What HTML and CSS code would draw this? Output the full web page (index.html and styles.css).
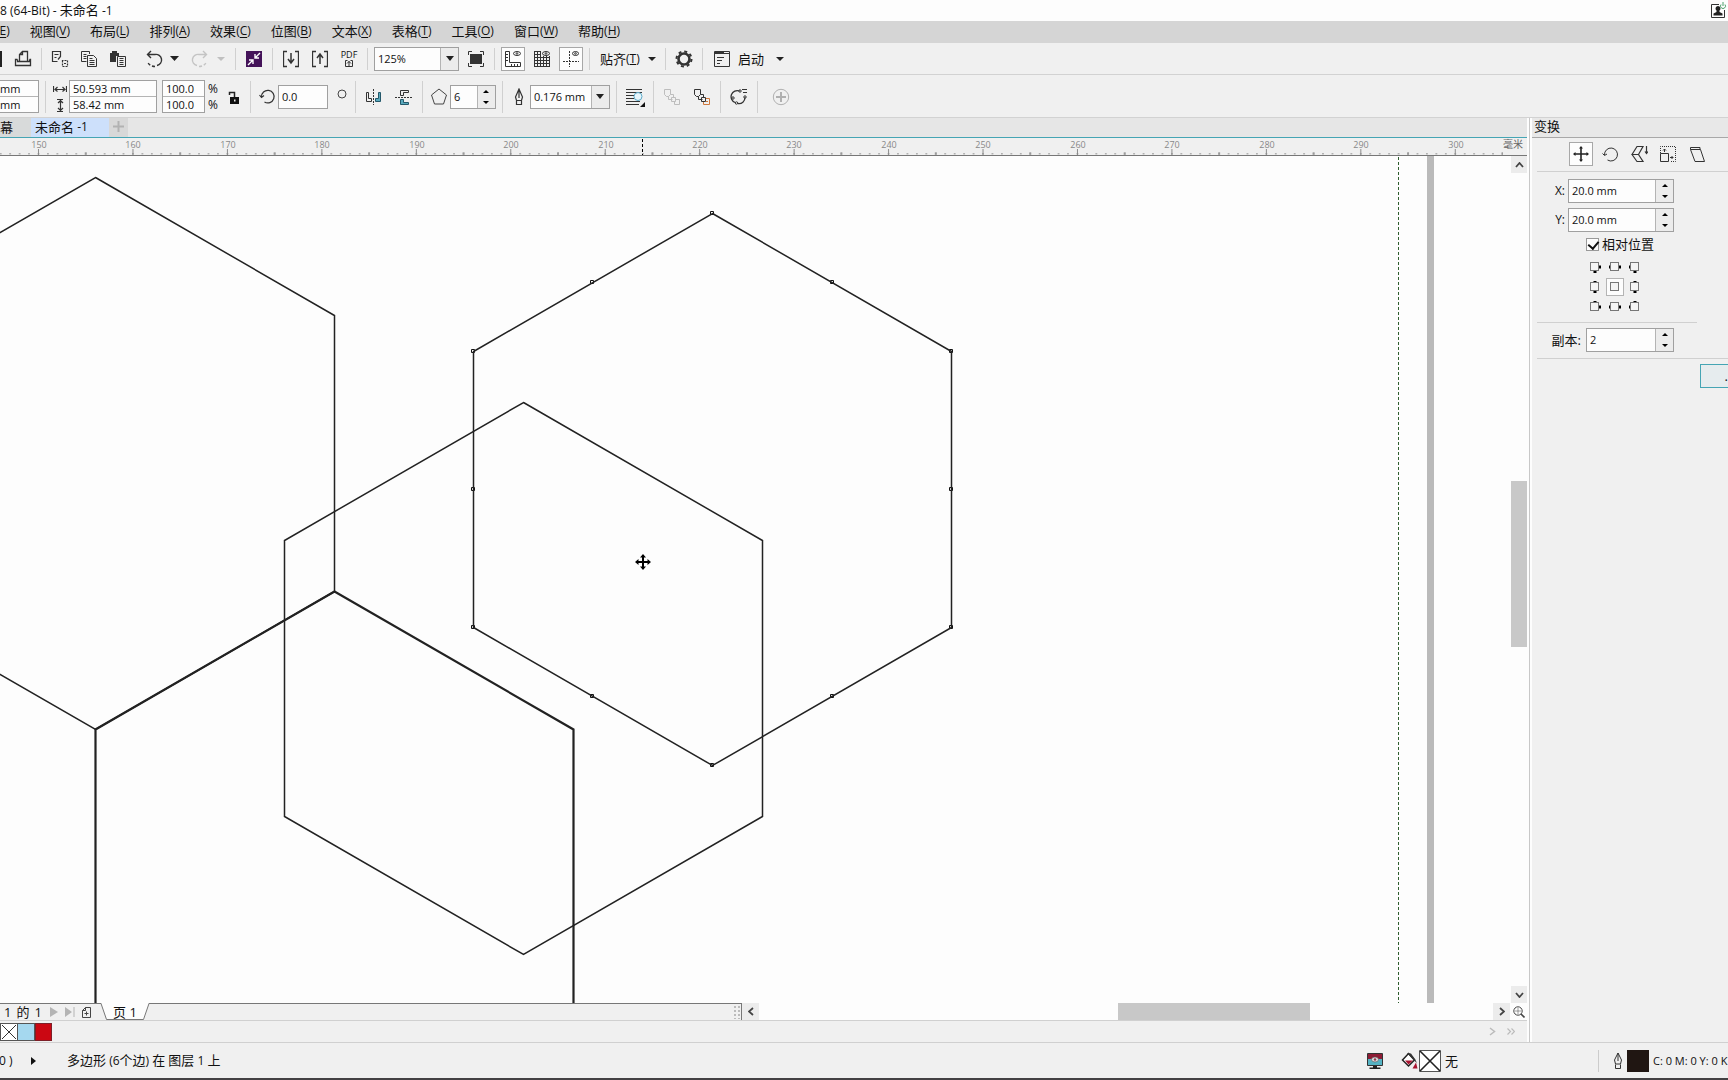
FILE: index.html
```html
<!DOCTYPE html>
<html lang="zh-CN">
<head>
<meta charset="utf-8">
<title>未命名 -1</title>
<link rel="stylesheet" href="styles.css">
</head>
<body>
<div class="app">
  <header class="titlebar">
    <h1 class="title"><span class="lat">8 (64-Bit) - </span>未命名<span class="lat"> -1</span></h1>
    <button class="user" aria-label="账户"><svg width="17" height="17" viewBox="0 0 17 17"><path d="M9 2.500H1.500v13h13V8" fill="none" stroke="#333"/><path d="M8 4a2.500 2.500 0 0 1 1.500 4.500L9.500 10l3 1.500V13.500H3.500V11.500L6.500 10V8.500A2.500 2.500 0 0 1 8 4z" fill="#222"/><path d="M11 2.500a2.500 2.500 0 1 0 4 0M13 0v4" fill="none" stroke="#4c9f6a"/></svg></button>
  </header>

  <nav class="menubar">
    <button class="menu first"><span class="lat">(<u>E</u>)</span></button>
    <button class="menu">视图<span class="lat">(<u>V</u>)</span></button>
    <button class="menu">布局<span class="lat">(<u>L</u>)</span></button>
    <button class="menu">排列<span class="lat">(<u>A</u>)</span></button>
    <button class="menu">效果<span class="lat">(<u>C</u>)</span></button>
    <button class="menu">位图<span class="lat">(<u>B</u>)</span></button>
    <button class="menu">文本<span class="lat">(<u>X</u>)</span></button>
    <button class="menu">表格<span class="lat">(<u>T</u>)</span></button>
    <button class="menu">工具<span class="lat">(<u>O</u>)</span></button>
    <button class="menu">窗口<span class="lat">(<u>W</u>)</span></button>
    <button class="menu">帮助<span class="lat">(<u>H</u>)</span></button>
  </nav>

  <div class="bar tools">
    <span class="edge"></span>
    <button class="ico" aria-label="打印"><svg width="18" height="18" viewBox="0 0 18 18" fill="none" stroke="#333" stroke-width="1.300"><path d="M5.500 11.500V4.500L8.500 1.500H13.500V11.500M8.500 1.500V4.500H5.500M3.500 9.500H1.500v6h15v-6H15.500M3.500 9.500v2H15.500v-2"/></svg></button>
    <span class="sep"></span>
    <button class="ico" aria-label="剪切"><svg width="18" height="18" viewBox="0 0 18 18" fill="none" stroke="#333" stroke-width="1.200"><path d="M6.500 11.500H1.500V1.500H9.500V6.500L7 9.500M3.500 4.500h4M3.500 7.500h2"/><path d="M11.500 11.500v-1h5v6h-5v-5M13 13.500h2" stroke-dasharray="2 1"/></svg></button>
    <button class="ico" aria-label="复制"><svg width="18" height="18" viewBox="0 0 18 18" fill="none" stroke="#333"><path d="M6.500 11.500H1.500V1.500H9.500V4M3.500 4.500h3M3.500 6.500h3M3.500 8.500h3"/><path d="M7.500 5.500h6l3 3v8h-9zM9.500 8.500h3M9.500 10.500h5M9.500 12.500h5M9.500 14.500h5"/></svg></button>
    <button class="ico" aria-label="粘贴"><svg width="18" height="18" viewBox="0 0 18 18" fill="none" stroke="#333"><path d="M1 3h2V1h5v2h2v3H7v6H1z" fill="#333" stroke="none"/><path d="M8.500 6.500h8v10h-8zM10.500 8.500h4M10.500 10.500h4M10.500 12.500h4M10.500 14.500h4"/></svg></button>
    <div class="split gap7">
      <button class="ico" aria-label="撤消"><svg width="18" height="18" viewBox="0 0 18 18" fill="none" stroke="#333" stroke-width="1.400"><path d="M3 4.500h7a5.500 5.500 0 0 1 2 11M6 1L2.500 4.500 6 8"/><path d="M10 16.500q-5 0-8-5" stroke-dasharray="3 2"/></svg></button>
      <button class="caret" aria-label="撤消列表"><svg width="9" height="5"><path d="M0 0h9L4.500 5z" fill="#222"/></svg></button>
    </div>
    <div class="split">
      <button class="ico" aria-label="重做" disabled><svg width="18" height="18" viewBox="0 0 18 18" fill="none" stroke="#c4c4c4" stroke-width="1.400"><path d="M15 4.500H8a5.500 5.500 0 0 0-2 11M12 1l3.500 3.500L12 8"/><path d="M8 16.500q5 0 8-5" stroke-dasharray="3 2"/></svg></button>
      <button class="caret" aria-label="重做列表" disabled><svg width="8" height="4"><path d="M0 0h8L4 4z" fill="#c0c0c0"/></svg></button>
    </div>
    <span class="sep"></span>
    <button class="ico" aria-label="搜索内容"><svg width="16" height="16" viewBox="0 0 16 16"><path d="M0 0h16v16H0z" fill="#441359"/><path d="M14 2L9.500 6.500M9 3v4h4M2 14l4.500-4.500M3 9h4v4" fill="none" stroke="#fff" stroke-width="1.400"/></svg></button>
    <span class="sep"></span>
    <button class="ico" aria-label="导入"><svg width="16" height="18" viewBox="0 0 16 18" fill="none" stroke="#333"><path d="M4 1.500H.5v15H4M12 1.500h3.500v15H12" stroke-width="1.300"/><path d="M8 3v9M5 9l3 4 3-4" stroke-width="1.500"/></svg></button>
    <button class="ico" aria-label="导出"><svg width="16" height="18" viewBox="0 0 16 18" fill="none" stroke="#333"><path d="M4 1.500H.5v15H4M12 1.500h3.500v15H12" stroke-width="1.300"/><path d="M8 14V5M5 8l3-4 3 4" stroke-width="1.500"/></svg></button>
    <button class="ico pdf" aria-label="发布为 PDF"><span>PDF</span><svg width="8" height="8" viewBox="0 0 8 8" fill="none" stroke="#333"><path d="M2.500 1.500H.5v6h7v-6h-2M4 7V2M2 4.500L4 2.500l2 2"/></svg></button>
    <span class="sep"></span>
    <div class="combo zoom">
      <select aria-label="缩放级别"><option>125%</option></select>
      <span class="drop"><svg width="8" height="5"><path d="M0 0h8L4 5z" fill="#222"/></svg></span>
    </div>
    <button class="ico" aria-label="全屏预览"><svg width="16" height="16" viewBox="0 0 16 16"><path d="M2 3h12v10H2z" fill="#333"/><path d="M4 .5H.5V4M12 .5h3.500V4M4 15.500H.5V12M12 15.500h3.500V12" fill="none" stroke="#333"/></svg></button>
    <span class="sep"></span>
    <button class="ico on" aria-label="标尺"><svg width="18" height="18" viewBox="0 0 18 18" fill="none" stroke="#333"><path d="M1.500 1.500h4v11h11v4h-15zM2 4.500h2M2 7.500h2M2 10.500h2M7.500 16v-2M10.500 16v-2M13.500 16v-2"/><ellipse cx="13" cy="3.500" rx="3.500" ry="2"/><circle cx="13" cy="3.500" r=".8"/></svg></button>
    <button class="ico" aria-label="网格"><svg width="18" height="18" viewBox="0 0 18 18" fill="none" stroke="#333"><path d="M1.500 1v16M4.500 1v16M7.500 1v16M10.500 6v11M13.500 6v11M16.500 6v11M1 1.500h7M1 4.500h7M1 7.500h16M1 10.500h16M1 13.500h16M1 16.500h16"/><ellipse cx="13" cy="3.500" rx="3.500" ry="2"/><circle cx="13" cy="3.500" r=".8"/></svg></button>
    <button class="ico on" aria-label="辅助线"><svg width="18" height="18" viewBox="0 0 18 18" fill="none" stroke="#333"><path d="M7.500 1v16M1 11.500h16" stroke-dasharray="2 1"/><ellipse cx="13.500" cy="3.500" rx="3" ry="2"/><circle cx="13.500" cy="3.500" r=".8"/></svg></button>
    <span class="sep"></span>
    <button class="word snap">贴齐<span class="lat">(<u>T</u>)</span><svg width="8" height="4"><path d="M0 0h8L4 4z" fill="#222"/></svg></button>
    <span class="sep"></span>
    <button class="ico" aria-label="选项"><svg width="18" height="18" viewBox="0 0 18 18"><circle cx="9" cy="9" r="5.500" fill="none" stroke="#333" stroke-width="2.600"/><circle cx="9" cy="9" r="7.500" fill="none" stroke="#333" stroke-width="2" stroke-dasharray="3 2.890"/></svg></button>
    <span class="sep"></span>
    <button class="word launch"><svg width="16" height="16" viewBox="0 0 16 16" fill="none" stroke="#333"><path d="M.5.5h15v15H.5zM0 2.500h16M3 6.500h7M3 9.500h5M3 12.500h3"/><path d="M1 1.500h9" stroke-width="2"/></svg><span>启动</span><svg width="8" height="4"><path d="M0 0h8L4 4z" fill="#222"/></svg></button>
  </div>

  <div class="bar props">
    <div class="stack pos">
      <input aria-label="X 位置" value="mm">
      <input aria-label="Y 位置" value="mm">
    </div>
    <span class="sep tall"></span>
    <div class="field">
      <svg width="14" height="30" viewBox="0 0 14 30" fill="none" stroke="#333"><path d="M.5 4v6M13.500 4v6M2 7.500h10M4.500 5L2 7.500l2.500 2M9.500 5L12 7.500l-2.500 2M4 17.500h6M4 29.500h6M7.500 18v11M5 21l2.500-2.500L10 21M5 26l2.500 2.500L10 26" stroke-width="1.200"/></svg>
      <div class="stack size">
        <input aria-label="宽度" value="50.593 mm">
        <input aria-label="高度" value="58.42 mm">
      </div>
    </div>
    <div class="stack scale">
      <input aria-label="水平缩放" value="100.0">
      <input aria-label="垂直缩放" value="100.0">
    </div>
    <div class="percent"><span>%</span><span>%</span></div>
    <button class="ico lock" aria-label="锁定比率"><svg width="12" height="14" viewBox="0 0 12 14"><path d="M2 7h9v7H2z" fill="#111"/><path d="M6.500 7V2.500h-5V5" fill="none" stroke="#222" stroke-width="1.500"/><path d="M6 9.500h1.500v2H6z" fill="#eee"/></svg></button>
    <span class="sep tall"></span>
    <div class="field rotate">
      <svg width="17" height="17" viewBox="0 0 17 17" fill="none" stroke="#333"><path d="M2.500 9a6.300 6.300 0 1 1 3 5M.5 7L2.500 9.500 5 7.500" stroke-width="1.200"/></svg>
      <input aria-label="旋转角度" value="0.0">
      <svg class="degree" width="10" height="16" viewBox="0 0 10 16"><circle cx="5" cy="5" r="4" fill="none" stroke="#444"/></svg>
    </div>
    <span class="sep tall"></span>
    <button class="ico" aria-label="水平镜像"><svg width="17" height="16" viewBox="0 0 17 16"><path d="M8.500 0v16" stroke="#333" stroke-dasharray="2 1"/><path d="M1.500 3.500h2v6h3v3h-5z" fill="none" stroke="#333"/><path d="M15.500 3.500h-2v6h-3v3h5z" fill="#58a9bd" stroke="#24586a"/></svg></button>
    <button class="ico next" aria-label="垂直镜像"><svg width="17" height="16" viewBox="0 0 17 16"><path d="M0 8.500h17" stroke="#333" stroke-dasharray="2 1"/><path d="M5.500 6.500v-5h8v2h-5v3z" fill="none" stroke="#333"/><path d="M5.500 10.500v5h8v-2h-5v-3z" fill="#58a9bd" stroke="#24586a"/></svg></button>
    <span class="sep tall"></span>
    <div class="field sides">
      <svg width="18" height="17" viewBox="0 0 18 17"><path d="M9 1l7.500 6-3 9h-9l-3-9z" fill="none" stroke="#444"/></svg>
      <div class="spin"><input aria-label="点数或边数" value="6"><span class="steps"><button aria-label="增加"><svg width="6" height="3"><path d="M0 3h6L3 0z"/></svg></button><button aria-label="减少"><svg width="6" height="3"><path d="M0 0h6L3 3z"/></svg></button></span></div>
    </div>
    <span class="sep tall"></span>
    <div class="field pen">
      <svg width="10" height="18" viewBox="0 0 10 18" fill="none" stroke="#333"><path d="M5 1L1.500 9l1 3.500h5l1-3.500zM5 1v9M2.500 13v3.500h5V13" stroke-width="1.200"/></svg>
      <div class="combo width">
        <select aria-label="轮廓宽度"><option>0.176 mm</option></select>
        <span class="drop"><svg width="8" height="5"><path d="M0 0h8L4 5z" fill="#222"/></svg></span>
      </div>
    </div>
    <span class="sep tall"></span>
    <button class="ico" aria-label="文本换行"><svg width="20" height="20" viewBox="0 0 20 20"><path d="M1 2.500h16M1 5.500h16M1 8.500h8M1 11.500h8M1 14.500h14M1 17.500h13" stroke="#333"/><circle cx="13" cy="9.500" r="4" fill="#e6f5fb" stroke="#5aa9c8"/><path d="M20 15v5h-5z" fill="#111"/></svg></button>
    <span class="sep tall"></span>
    <button class="ico" aria-label="到图层前面" disabled><svg width="18" height="18" viewBox="0 0 18 18" fill="none" stroke="#bdbdbd"><path d="M1.500 1.500h6v5l-2 2h-2l-2-2zM5.500 8.500v3h4M7.500 6.500h3v3M8.500 9.500h4v4h-4zM12.500 11.500h4v5h-5v-3"/></svg></button>
    <button class="ico next" aria-label="到图层后面"><svg width="18" height="18" viewBox="0 0 18 18" fill="none" stroke="#333"><path d="M1.500 1.500h6v5l-2 2h-2l-2-2zM5.500 8.500v3h4M7.500 6.500h3v3M8.500 9.500h4v4h-4z"/><path d="M13 10.500h3.500v6h-6V14M13 13.500h2" stroke="#d0783c"/></svg></button>
    <span class="sep tall"></span>
    <button class="ico" aria-label="转换为曲线"><svg width="18" height="18" viewBox="0 0 18 18" fill="none" stroke="#333"><path d="M9.500 3A6 6 0 0 0 5 14.500M8 15.500a6 6 0 0 0 7-6" stroke-width="1.300"/><circle cx="10" cy="3" r="1.200"/><circle cx="3" cy="10" r="1.200"/><circle cx="6.500" cy="15" r="1.200"/><circle cx="15" cy="9" r="1.200"/><path d="M12 1.500h5M13 4.500h4"/></svg></button>
    <span class="sep tall"></span>
    <button class="ico add" aria-label="添加"><svg width="18" height="18" viewBox="0 0 18 18" fill="none" stroke="#b0b0b0"><circle cx="9" cy="9" r="7.700"/><path d="M4 9h10M9 4v10" stroke-width="2"/></svg></button>
  </div>

  <div class="work">
    <main class="doc">
      <div class="tabs">
        <button class="tab">幕</button>
        <button class="tab active">未命名<span class="lat"> -1</span></button>
        <button class="tab plus" aria-label="新建"><svg width="11" height="11"><path d="M0 5.500h11M5.500 0v11" stroke="#b2b2b2" stroke-width="2"/></svg></button>
      </div>
      <div class="ruler">
        <svg width="100%" height="17">
          <defs><pattern id="mm" x="33.800" width="9.445" height="17" patternUnits="userSpaceOnUse"><path d="M4.700 15v1.500" stroke="#777"/></pattern>
          <pattern id="cm" x="-8.700" width="94.450" height="17" patternUnits="userSpaceOnUse"><path d="M47.200 11v6" stroke="#888"/><path d="M94.400 14v3M.1 14v3" stroke="#888"/></pattern></defs>
          <rect width="100%" height="17" fill="url(#mm)"/><rect width="100%" height="17" fill="url(#cm)"/>
          <g class="nums"><text x="39" y="10">150</text><text x="133" y="10">160</text><text x="228" y="10">170</text><text x="322" y="10">180</text><text x="417" y="10">190</text><text x="511" y="10">200</text><text x="606" y="10">210</text><text x="700" y="10">220</text><text x="794" y="10">230</text><text x="889" y="10">240</text><text x="983" y="10">250</text><text x="1078" y="10">260</text><text x="1172" y="10">270</text><text x="1267" y="10">280</text><text x="1361" y="10">290</text><text x="1456" y="10">300</text></g>
          <path d="M642.500 1v16" stroke="#000" stroke-dasharray="3 2"/>
        </svg>
        <span class="unit">毫米</span>
      </div>
      <div class="view">
        <svg class="canvas" width="100%" height="100%">
          <path d="M1398.500 1V860" stroke="#2e5c2e" stroke-dasharray="3 2"/>
          <path d="M1430.500 0V860" stroke="#bababa" stroke-width="7"/>
          <g fill="#fff" stroke="#111"><path d="M710.500 55.500h3v3h-3zM590.500 124.500h3v3h-3zM830.500 124.500h3v3h-3zM471.500 193.500h3v3h-3zM949.500 193.500h3v3h-3zM471.500 331.500h3v3h-3zM949.500 331.500h3v3h-3zM471.500 469.500h3v3h-3zM949.500 469.500h3v3h-3zM590.500 538.500h3v3h-3zM830.500 538.500h3v3h-3zM710.500 607.500h3v3h-3z"/></g>
          <g fill="none" stroke="#222" stroke-width="1.500">
            <path d="M95.500 21.500L334.500 159.500V435.500L95.500 573.500L-143.500 435.500V159.500z"/>
            <path d="M334.500 435.500L573.500 573.500V860M95.500 860V573.500L334.500 435.500" stroke-width="2.200"/>
            <path d="M523.500 246.500L762.500 384.500V660.500L523.500 798.500L284.500 660.500V384.500z"/>
            <path d="M712.500 57.500L951.500 195.500V471.500L712.500 609.500L473.500 471.500V195.500z"/>
          </g>
          <g><path d="M636 406h14M643 399v14" stroke="#000" stroke-width="2"/><path d="M643 398l3 3.500h-6zM643 414l3-3.500h-6zM635 406l3.500-3v6zM651 406l-3.500-3v6z"/></g>
        </svg>
        <div class="vscroll">
          <button aria-label="向上滚动"><svg width="9" height="6"><path d="M1 5l3.500-4L8 5" fill="none" stroke="#444" stroke-width="1.800"/></svg></button>
          <span class="above"></span><span class="thumb"></span><span class="below"></span>
          <button aria-label="向下滚动"><svg width="9" height="6"><path d="M1 1l3.500 4L8 1" fill="none" stroke="#444" stroke-width="1.800"/></svg></button>
        </div>
      </div>
      <div class="pages">
        <div class="pager">
          <span class="count"><span>1</span><span>的</span><span>1</span></span>
          <button aria-label="下一页"><svg width="8" height="10"><path d="M0 0l8 5-8 5z" fill="#b4b4b4"/></svg></button>
          <button aria-label="末页"><svg width="10" height="10"><path d="M0 0l7 5-7 5zM8.500 0h1v10h-1z" fill="#b4b4b4"/></svg></button>
          <button aria-label="添加页"><svg width="9" height="11" viewBox="0 0 9 11" fill="none" stroke="#444"><path d="M3.500.5h5v10h-8v-7zM3.500.5v3h-3M2.500 6.500h4M4.500 4.500v4"/></svg></button>
          <button class="page"><svg width="50" height="18" viewBox="0 0 50 18"><path d="M1 0l6 16.500h37L49 0z" fill="#fdfdfd"/><path d="M1 .5l5.500 16h37L49 .5" fill="none" stroke="#777"/></svg><span>页 1</span></button>
          <span class="grip"></span>
        </div>
        <div class="hscroll">
          <button aria-label="向左滚动"><svg width="6" height="9"><path d="M5 1L1 4.500 5 8" fill="none" stroke="#444" stroke-width="1.800"/></svg></button>
          <span class="before"></span><span class="thumb"></span><span class="after"></span>
          <button aria-label="向右滚动"><svg width="6" height="9"><path d="M1 1l4 3.500L1 8" fill="none" stroke="#444" stroke-width="1.800"/></svg></button>
        </div>
        <button class="nav" aria-label="导航器"><svg width="12" height="12" viewBox="0 0 12 12" fill="none" stroke="#444"><circle cx="5" cy="5" r="4.200"/><path d="M8 8l3.500 3.500" stroke-width="1.600"/><path d="M5 2.500v5M2.500 5h5" stroke-dasharray="1 1"/></svg></button>
      </div>
      <div class="palette">
        <button class="swatch none" aria-label="无填充"><svg width="16" height="16"><path d="M1 1l14 14M15 1L1 15" stroke="#333"/></svg></button>
        <button class="swatch blue" aria-label="浅蓝"></button>
        <button class="swatch red" aria-label="红"></button>
        <span class="more"><svg width="7" height="9"><path d="M1 1l4.500 3.500L1 8" fill="none" stroke="#bbb" stroke-width="1.500"/></svg><svg width="8" height="7"><path d="M.5.5l3 3-3 3M4.500.5l3 3-3 3" fill="none" stroke="#bbb" stroke-width="1.200"/></svg></span>
      </div>
    </main>

    <aside class="docker">
      <h2>变换</h2>
      <div class="modes">
        <button class="ico on" aria-label="位置"><svg width="16" height="16" viewBox="0 0 16 16"><path d="M1 8h14M8 1v14" stroke="#222" stroke-width="1.600"/><path d="M8 0l2 2.500H6zM8 16l2-2.500H6zM0 8l2.500-2v4zM16 8l-2.500-2v4z" fill="#222"/></svg></button>
        <button class="ico" aria-label="旋转"><svg width="17" height="17" viewBox="0 0 17 17" fill="none" stroke="#333"><path d="M2.500 9a6.500 6.500 0 1 1 3 5M.5 7.500L2.500 9.500 5 8"/></svg></button>
        <button class="ico" aria-label="缩放和镜像"><svg width="17" height="18" viewBox="0 0 17 18" fill="none" stroke="#333"><path d="M1 9.500L6 1.500h6L7.500 9.500zM1 9.500l5 7h6l-4.500-7M2 9.500h6M15.500 1v7M14 6.500l1.500 2L17 6.500" stroke-width="1.200"/></svg></button>
        <button class="ico" aria-label="大小"><svg width="18" height="18" viewBox="0 0 18 18" fill="none" stroke="#333"><path d="M1.500 8V1.500h15v15H11" stroke-dasharray="1 1"/><path d="M1.500 8.500h8v8h-8zM5.500 7V4M4 5.500l1.500-1.500L7 5.500M11 12.500h3M12.500 11l1.500 1.500-1.500 1.500"/></svg></button>
        <button class="ico" aria-label="倾斜"><svg width="17" height="17" viewBox="0 0 17 17" fill="none" stroke="#333"><path d="M1.500 3.500h10l4 12h-9.500zM1.500 3.500v-2h9.500v2"/></svg></button>
      </div>
      <div class="group coords">
        <label for="px">X:</label>
        <div class="spin"><input id="px" value="20.0 mm"><span class="steps"><button aria-label="增加"><svg width="6" height="3"><path d="M0 3h6L3 0z"/></svg></button><button aria-label="减少"><svg width="6" height="3"><path d="M0 0h6L3 3z"/></svg></button></span></div>
        <label for="py">Y:</label>
        <div class="spin"><input id="py" value="20.0 mm"><span class="steps"><button aria-label="增加"><svg width="6" height="3"><path d="M0 3h6L3 0z"/></svg></button><button aria-label="减少"><svg width="6" height="3"><path d="M0 0h6L3 3z"/></svg></button></span></div>
      </div>
      <label class="relative"><input type="checkbox" checked>相对位置</label>
      <div class="anchors">
        <button aria-label="左上"><svg width="12" height="12"><path d="M4.500 10h3v2h-3zM10 4.500h2v3h-2z"/><rect x="1.500" y="1.500" width="8" height="8"/></svg></button>
        <button aria-label="上"><svg width="12" height="12"><path d="M0 4.500h2v3H0zM10 4.500h2v3h-2z"/><rect x="1.500" y="1.500" width="8" height="8"/></svg></button>
        <button aria-label="右上"><svg width="12" height="12"><path d="M4.500 10h3v2h-3zM0 4.500h2v3H0z"/><rect x="1.500" y="1.500" width="8" height="8"/></svg></button>
        <button aria-label="左"><svg width="12" height="12"><path d="M4.500 0h3v2h-3zM4.500 10h3v2h-3z"/><rect x="1.500" y="1.500" width="8" height="8"/></svg></button>
        <button class="picked" aria-label="中心"><svg width="12" height="12"><rect x="1.500" y="1.500" width="8" height="8"/></svg></button>
        <button aria-label="右"><svg width="12" height="12"><path d="M4.500 0h3v2h-3zM4.500 10h3v2h-3z"/><rect x="1.500" y="1.500" width="8" height="8"/></svg></button>
        <button aria-label="左下"><svg width="12" height="12"><path d="M4.500 0h3v2h-3zM10 4.500h2v3h-2z"/><rect x="1.500" y="1.500" width="8" height="8"/></svg></button>
        <button aria-label="下"><svg width="12" height="12"><path d="M0 4.500h2v3H0zM10 4.500h2v3h-2z"/><rect x="1.500" y="1.500" width="8" height="8"/></svg></button>
        <button aria-label="右下"><svg width="12" height="12"><path d="M4.500 0h3v2h-3zM0 4.500h2v3H0z"/><rect x="1.500" y="1.500" width="8" height="8"/></svg></button>
      </div>
      <div class="group copies">
        <label for="copies">副本:</label>
        <div class="spin"><input id="copies" value="2"><span class="steps"><button aria-label="增加"><svg width="6" height="3"><path d="M0 3h6L3 0z"/></svg></button><button aria-label="减少"><svg width="6" height="3"><path d="M0 0h6L3 3z"/></svg></button></span></div>
      </div>
      <button class="apply" aria-label="应用">.</button>
    </aside>
  </div>

  <footer class="status">
    <span class="coord">0 )</span>
    <button class="play" aria-label="展开"><svg width="5" height="8"><path d="M0 0l5 4-5 4z" fill="#111"/></svg></button>
    <span class="object">多边形<span class="lat"> (6</span>个边<span class="lat">) </span>在<span class="lat"> </span>图层<span class="lat"> 1 </span>上</span>
    <svg class="proof" width="16" height="16" viewBox="0 0 16 16"><path d="M.5.5h15v12H.5z" fill="#55b3c4" stroke="#333"/><path d="M1 1h14v5H1z" fill="#8d1c35"/><ellipse cx="8" cy="6.500" rx="3.500" ry="2.500" fill="#ddd" stroke="#555" stroke-width=".6"/><circle cx="8" cy="6.500" r="1.200" fill="#8d3a50"/><path d="M6 13h4v1.500H6zM2.500 14.500h11V16h-11z" fill="#222"/></svg>
    <div class="fill"><svg width="17" height="17" viewBox="0 0 17 17"><path d="M7.500 1.500l6 6.500-6 6L1.500 8z" fill="#fff" stroke="#222" stroke-width="1.500"/><path d="M4 8.500h8l-4.500 4z" fill="#a81330"/><path d="M6 1l4 .5 4 5.500 2 4-3-2.500z" fill="#333"/><path d="M15 10.500l1.500 6h-5z" fill="#a81330"/></svg><svg class="chip" width="22" height="22"><path d="M.5.5h21v21H.5z" fill="#fff" stroke="#555"/><path d="M1 1l20 20M21 1L1 21" stroke="#222" stroke-width="1.600"/></svg><span>无</span></div>
    <div class="outline"><svg width="10" height="18" viewBox="0 0 10 18" fill="none" stroke="#333"><path d="M5 1L1.500 8l1 4h5l1-4zM5 1v8M2.500 12.500v4h5v-4"/></svg><span class="ink"></span><span class="cmyk">C: 0 M: 0 Y: 0 K</span></div>
  </footer>
</div>
</body>
</html>
```
FILE: styles.css
```css
* { box-sizing: border-box; }
body {
  margin: 0;
  background: #f0f0f0;
  color: #111;
  font-family: "Open Sans", "Noto Sans CJK SC", sans-serif;
  font-size: 13px;
  line-height: 18px;
}
button, input, select { font: inherit; color: inherit; margin: 0; padding: 0; border: 0; background: none; border-radius: 0; }
button { display: flex; align-items: center; justify-content: center; white-space: pre; }
svg { display: block; flex: none; }
.lat { font-size: 12px; white-space: pre; }
.app { height: 100vh; display: flex; flex-direction: column; overflow: hidden; border-bottom: 2px solid #434143; }

.titlebar { height: 21px; flex: none; display: flex; justify-content: space-between; align-items: center; background: #fdfdfd; }
.title { margin: 0; font-size: 13px; font-weight: 400; }
.user { width: 19px; height: 21px; }
.menubar { height: 22px; flex: none; display: flex; gap: 20px; align-items: center; padding-bottom: 2px; background: #d5d5d5; overflow: hidden; }
.menu u { text-underline-offset: 2px; }
.menu.first { margin-left: -4px; }

.bar { flex: none; display: flex; align-items: center; gap: 5px; border-bottom: 1px solid #d2d2d2; }
.tools { height: 32px; }
.props { height: 43px; padding-top: 1px; }
.edge { width: 2px; height: 16px; background: #222; margin-right: 4px; }
.sep { width: 1px; height: 22px; margin: 0 1px; background: #d0d0d0; }
.sep.tall { height: 32px; }
.ico { width: 24px; height: 24px; flex: none; }
.ico.on { background: #fdfdfd; border: 1px solid #a8a8a8; }
.split { display: flex; }
.split.gap7 { margin-left: 7px; }
.caret { width: 17px; }
.pdf { flex-direction: column; font-size: 9px; line-height: 9px; }
.combo { display: flex; height: 24px; border: 1px solid #a0a0a0; background: #fdfdfd; font-size: 11px; }
.combo select { flex: 1; min-width: 0; appearance: none; padding-left: 3px; }
.drop { width: 18px; display: flex; align-items: center; justify-content: center; background: #ececec; border-left: 1px solid #b4b4b4; }
.zoom { width: 85px; }
.width { width: 80px; }
.snap { padding-left: 4px; width: 63px; justify-content: flex-start; }
.snap svg { margin-left: 8px; }
.launch { padding-left: 5px; gap: 8px; }
.launch svg:last-child { margin-left: 4px; }

.stack { display: flex; flex-direction: column; height: 33px; border: 1px solid #a0a0a0; background: #fdfdfd; font-size: 11px; }
.stack input { flex: 1; min-height: 0; width: 100%; padding-left: 3px; }
.stack input + input { border-top: 1px solid #b4b4b4; }
.pos { width: 39px; border-left: 0; }
.pos input { padding-left: 0; }
.field { display: flex; align-items: center; gap: 2px; }
.field:has(.size) { padding-left: 1px; }
.size { width: 88px; }
.scale { width: 43px; }
.percent { display: flex; flex-direction: column; font-size: 12px; line-height: 16px; margin-left: -2px; }
.lock { margin: 0 -2px 0 -1px; }
.rotate { padding-left: 2px; }
.rotate input { width: 50px; height: 24px; border: 1px solid #a0a0a0; background: #fdfdfd; padding-left: 3px; font-size: 11px; }
.degree { margin: 0 2px 0 7px; }
.next { margin-left: 1px; }
.sides { padding-left: 1px; }
.pen { padding-left: 5px; gap: 6px; }
.spin { display: flex; height: 24px; border: 1px solid #a0a0a0; background: #fdfdfd; font-size: 11px; }
.spin input { flex: 1; min-width: 0; padding-left: 3px; }
.steps { width: 18px; display: flex; flex-direction: column; background: #ececec; border-left: 1px solid #b4b4b4; }
.steps button { flex: 1; }
.sides .spin { width: 46px; }
.add { margin-left: 5px; }

.work { flex: 1; min-height: 0; display: flex; }
.doc { flex: 1; min-width: 0; display: flex; flex-direction: column; }
.tabs { height: 20px; flex: none; display: flex; background: #e6e6e6; border-bottom: 1px solid #45a5b4; }
.tab { width: 31px; background: #d8dada; justify-content: flex-start; padding-bottom: 2px; }
.tab.active { width: 78px; padding-left: 4px; background: #cde0fb; }
.tab.plus { width: 19px; justify-content: center; background: #d8d8d8; }
.ruler { height: 18px; flex: none; display: flex; align-items: center; border-bottom: 1px solid #777; }
.ruler svg { flex: 1; width: 0; }
.nums { font-size: 9px; fill: #888; text-anchor: middle; }
.unit { width: 24px; font-size: 10px; line-height: 12px; color: #666; align-self: flex-start; }
.view { flex: 1; min-height: 0; display: flex; background: #fdfdfd; }
.canvas { flex: 1; width: 0; }
.vscroll { width: 16px; display: flex; flex-direction: column; }
.vscroll button { height: 17px; background: #ececec; }
.thumb { background: #c8c8c8; }
.vscroll .above { flex: 308; }
.vscroll .thumb { flex: 166; }
.vscroll .below { flex: 339; }
.pages { height: 18px; flex: none; display: flex; background: #fdfdfd; border-bottom: 1px solid #d0d0d0; }
.pager { width: 742px; display: flex; align-items: center; background: #f0f0f0; border-top: 1px solid #777; border-right: 1px solid #777; padding-left: 4px; }
.count { width: 46px; display: flex; gap: 5px; }
.pager button { margin-right: 7px; }
.pager .page { display: grid; margin: -1px 0 0 2px; place-items: center; align-self: flex-start; height: 18px; }
.page > * { grid-area: 1 / 1; }
.page span { line-height: 16px; }
.grip { width: 8px; height: 14px; margin-left: auto; background: radial-gradient(#bbb 1px, transparent 1px) 0 0 / 4px 4px; }
.hscroll { flex: 1; display: flex; }
.hscroll button { width: 17px; background: #ececec; }
.hscroll .before { flex: 359; }
.hscroll .thumb { flex: 192; }
.hscroll .after { flex: 183; }
.nav { width: 17px; }
.palette { height: 21px; flex: none; display: flex; align-items: center; }
.swatch { width: 17px; height: 18px; border: 1px solid #555; }
.swatch.none { width: 18px; background: #fff; }
.swatch.blue { background: #a5d8ef; border-left: 0; }
.swatch.red { background: #cb0712; border-color: #7d1f28; }
.more { margin-left: auto; display: flex; align-items: center; gap: 11px; padding-right: 12px; }

.docker { width: 201px; flex: none; border-left: 2px solid #fdfdfd; box-shadow: inset 1px 0 #c8c8c8, inset 3px 0 #fdfdfd; padding-left: 3px; }
.docker h2 { margin: 0; height: 20px; padding-left: 2px; font-size: 13px; line-height: 16px; font-weight: 400; background: #e8e8e8; border-bottom: 1px solid #a8a8a8; }
.modes { display: flex; gap: 5px; margin-left: 5px; padding: 4px 0 5px 32px; border-bottom: 1px solid #d0d0d0; }
.group { display: grid; align-items: center; justify-items: end; column-gap: 3px; row-gap: 5px; font-size: 12px; }
.group .spin { width: 100%; }
.coords { grid-template-columns: 33px 106px; padding-top: 7px; }
.relative { display: flex; align-items: center; gap: 3px; padding: 3px 0 4px 54px; }
.relative input { appearance: none; width: 13px; height: 13px; border: 1px solid #999; background: #fdfdfd; position: relative; }
.relative input:checked::after { content: ""; position: absolute; left: 3px; top: 0; width: 5px; height: 8px; border: solid #111; border-width: 0 2px 2px 0; transform: rotate(40deg); }
.anchors { display: grid; grid-template-columns: repeat(3, 20px); grid-auto-rows: 20px; padding: 0 0 5px 53px; }
.anchors button { width: 18px; height: 18px; place-self: center; }
.anchors .picked { background: #fdfdfd; border: 1px solid #b4b4b4; }
.anchors rect { fill: #f4f4f4; stroke: #777; }
.copies { grid-template-columns: 44px 88px; margin-left: 5px; padding: 6px 0; position: relative; border-bottom: 1px solid #d0d0d0; font-size: 13px; column-gap: 5px; }
.copies::before { content: ""; position: absolute; left: 0; top: 0; width: 160px; height: 1px; background: #d0d0d0; }
.apply { width: 28px; height: 24px; margin: 5px 0 0 auto; border: 1px solid #45a5b4; border-right: 0; background: #e6ecee; justify-content: flex-end; }

.status { height: 36px; flex: none; display: flex; align-items: center; border-top: 1px solid #d0d0d0; white-space: pre; overflow: hidden; }
.coord { width: 32px; font-size: 12px; margin-left: -1px; }
.object { margin-left: 31px; flex: 1; }
.proof { margin-right: 18px; }
.fill { display: flex; align-items: center; width: 197px; gap: 4px; }
.chip { margin-left: -3px; }
.outline { display: flex; align-items: center; width: 130px; height: 22px; padding-left: 14px; border-left: 1px solid #ccc; gap: 4px; }
.ink { width: 22px; height: 22px; flex: none; background: #201612; }
.cmyk { font-size: 11px; }
```
